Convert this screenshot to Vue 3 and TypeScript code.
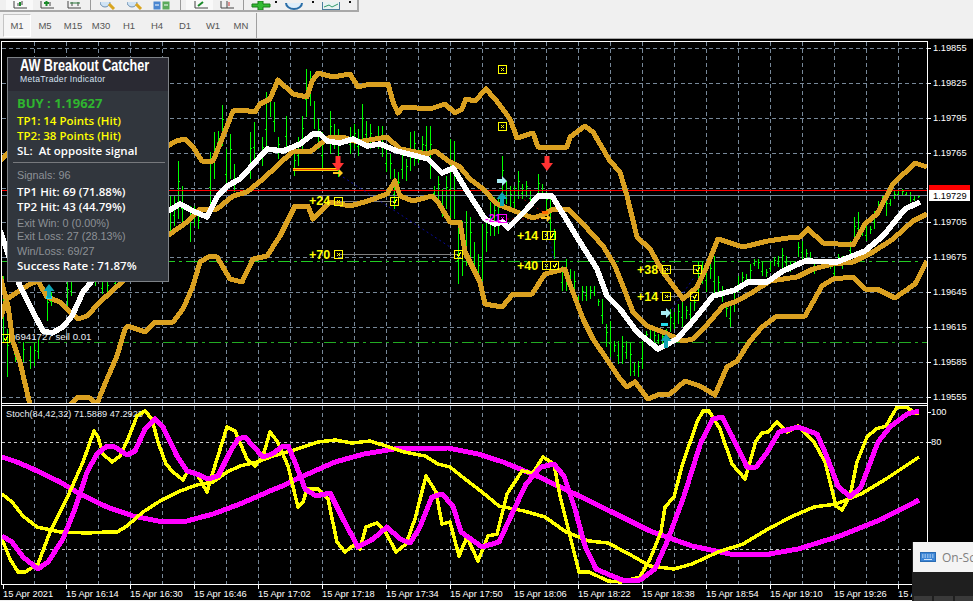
<script setup lang="ts">
const frames = ['M1', 'M5', 'M15', 'M30', 'H1', 'H4', 'D1', 'W1', 'MN']

const vGrid: number[] = []
for (let x = 34; x <= 898; x += 32) vGrid.push(x)
const hGrid = [49, 84, 119, 154, 189, 223, 258, 293, 328, 363, 398]
const priceLabels: [number, string][] = [
  [49, '1.19855'], [84, '1.19825'], [119, '1.19795'], [154, '1.19765'], [223, '1.19705'],
  [258, '1.19675'], [293, '1.19645'], [328, '1.19615'], [363, '1.19585'], [398, '1.19555'],
]
const timeLabels: [number, string][] = [
  [3, '15 Apr 2021'], [66, '15 Apr 16:14'], [130, '15 Apr 16:30'], [194, '15 Apr 16:46'],
  [258, '15 Apr 17:02'], [322, '15 Apr 17:18'], [386, '15 Apr 17:34'], [450, '15 Apr 17:50'],
  [514, '15 Apr 18:06'], [578, '15 Apr 18:22'], [642, '15 Apr 18:38'], [706, '15 Apr 18:54'],
  [770, '15 Apr 19:10'], [834, '15 Apr 19:26'], [898, '15 Apr 19:42'],
]

const upper = '0,162 7,155 14,146 60,135 120,140 168,147 176,142 185,140 193,148 202,162 213,162 218,150 233,112 242,111 255,113 260,105 270,100 278,81 293,95 307,98 312,82 318,74 333,78 350,75 358,88 370,85 388,85 393,103 398,114 403,108 430,110 445,105 455,114 462,110 466,100 475,102 486,90 495,100 510,120 517,139 533,134 538,148 567,148 570,138 585,127 593,133 610,162 620,173 627,197 637,238 650,250 663,273 683,300 697,288 707,267 718,240 743,248 768,242 788,239 800,238 808,230 823,244 853,246 865,225 877,215 893,185 915,164 927,168'
const mid = '0,320 7,300 30,285 38,282 47,298 60,303 70,313 78,320 87,317 100,303 123,282 145,250 170,235 187,223 200,210 217,210 233,197 247,193 263,180 277,167 293,152 310,153 320,145 330,138 343,138 357,143 387,138 400,150 427,155 435,152 450,163 460,168 470,180 483,190 497,205 517,213 533,219 545,215 553,210 568,210 583,225 603,247 615,267 628,300 633,313 647,327 663,333 683,342 693,340 705,328 723,307 737,302 753,293 770,282 797,278 813,270 833,265 853,263 873,253 893,240 913,222 927,215'
const white = '0,232 2,237 7,252 20,287 33,313 43,332 52,334 63,328 72,317 83,293 92,282 120,250 168,212 180,205 193,212 207,218 217,198 227,187 240,180 267,150 283,152 300,145 313,135 320,135 327,142 340,144 353,140 367,147 380,145 397,152 420,158 428,160 442,174 453,169 467,192 485,220 495,225 503,223 508,229 520,217 527,210 538,197 552,197 563,215 580,243 597,270 607,297 620,310 637,333 658,350 677,340 692,323 713,297 735,291 748,283 767,283 783,272 805,262 837,263 865,252 883,237 905,210 920,203'
const lower = '0,277 8,307 13,343 20,363 27,393 30,406 70,406 78,398 90,399 97,406 100,397 107,380 117,357 125,330 128,327 145,333 155,323 173,323 183,310 193,287 200,263 210,257 217,258 230,280 242,283 253,260 267,257 280,237 295,207 308,207 313,220 330,203 350,207 368,202 387,195 395,182 400,197 413,202 432,197 438,203 450,223 460,223 465,253 480,283 485,305 502,308 513,295 532,295 545,275 565,270 568,280 583,320 593,340 608,362 620,380 627,388 635,383 648,400 660,395 670,395 685,382 700,387 715,396 727,368 737,362 750,342 762,328 777,317 805,317 813,303 822,287 833,280 853,278 865,290 877,290 895,299 915,285 927,262'

const yFast = '2,540 10,560 18,573 25,573 38,565 50,533 63,507 68,497 83,463 94,432 98,438 103,455 112,463 120,457 128,440 137,417 145,412 152,420 158,443 166,465 173,473 183,481 188,472 197,475 207,493 213,473 227,428 235,432 247,460 255,467 263,457 270,433 277,442 282,453 288,467 298,508 303,503 307,490 318,490 328,500 337,543 345,553 354,546 360,550 366,528 377,524 385,532 396,553 406,545 415,520 426,477 436,493 442,525 450,523 459,557 467,538 478,562 488,537 497,535 507,495 522,472 533,474 543,458 554,465 560,497 570,537 579,573 589,573 608,582 621,583 640,578 650,560 661,533 665,508 674,498 682,467 697,423 703,412 709,412 720,430 732,465 745,480 756,442 762,434 768,433 777,423 787,433 798,427 814,443 825,463 836,507 842,511 850,497 857,463 867,438 876,430 886,427 897,408 907,408 913,413 919,415'
const mFast = '2,537 12,543 23,558 38,570 48,563 63,540 75,510 87,473 97,455 107,447 115,448 127,456 135,452 145,430 155,420 163,428 177,457 187,472 197,475 208,480 218,477 230,453 238,440 245,438 253,447 263,458 272,455 283,447 288,447 295,463 305,490 316,497 330,494 343,520 358,548 373,540 387,528 400,540 410,544 419,530 432,498 442,495 453,507 461,533 482,548 499,543 511,517 526,485 541,468 554,465 564,477 575,510 585,547 596,570 612,577 625,582 640,581 655,570 667,543 684,497 701,443 713,420 722,418 732,437 747,468 756,468 766,455 779,433 798,428 817,435 825,453 838,487 850,498 861,488 878,443 890,428 907,415 919,412'
const ySlow = '2,495 12,503 23,517 37,528 60,533 87,534 107,533 117,533 127,527 143,513 160,502 180,492 197,486 213,483 227,473 240,467 257,463 273,457 287,453 297,450 318,443 335,441 352,444 370,442 389,448 404,453 425,457 438,465 450,468 465,480 482,493 499,507 524,512 545,518 566,533 589,542 608,544 629,555 650,567 674,570 692,565 718,553 743,545 768,530 793,517 814,508 836,505 861,495 886,480 919,458'
const mSlow = '2,458 17,463 33,470 60,483 80,495 107,508 133,517 163,523 187,522 213,515 240,505 270,492 280,488 301,478 335,463 364,455 394,450 448,449 478,455 503,463 537,477 575,495 612,513 650,532 692,547 730,555 764,556 798,550 840,537 882,520 919,501'

const bars: [number, number, number][] = [
  [3, 277, 343], [7, 330, 378], [15, 343, 363], [23, 343, 363], [30, 347, 370], [34, 343, 367], [38, 340, 360],
  [47, 293, 322], [51, 293, 307], [67, 280, 310], [71, 283, 297], [95, 280, 287], [102, 280, 295], [107, 282, 293], [115, 282, 285],
  [170, 197, 233], [174, 197, 227], [178, 162, 220], [182, 187, 223], [190, 207, 243], [194, 207, 227], [198, 217, 230],
  [210, 153, 210], [214, 133, 180], [218, 132, 150], [222, 106, 147], [226, 150, 190], [230, 135, 180], [234, 165, 193],
  [250, 133, 180], [254, 123, 163], [262, 138, 167], [266, 93, 153], [270, 92, 118], [274, 103, 133], [278, 138, 160],
  [286, 117, 150], [294, 153, 177], [298, 138, 167], [302, 117, 153], [306, 70, 118], [310, 72, 107], [314, 102, 130], [318, 120, 150],
  [322, 133, 170], [330, 112, 155], [334, 125, 150], [338, 130, 178],
  [350, 128, 155], [354, 125, 150], [358, 130, 157], [362, 105, 147], [366, 122, 143], [370, 125, 150], [378, 127, 150], [382, 127, 158], [386, 150, 173],
  [390, 155, 180], [394, 170, 210], [398, 173, 203], [402, 153, 180], [406, 160, 182], [410, 133, 172], [414, 132, 167], [418, 150, 164], [422, 137, 160],
  [426, 127, 157], [430, 127, 180], [434, 187, 198], [438, 177, 200], [442, 190, 218], [446, 177, 210], [450, 140, 220], [454, 142, 220], [458, 223, 285],
  [462, 222, 277], [466, 212, 267], [470, 218, 263], [474, 243, 267], [478, 255, 287], [482, 225, 282], [486, 222, 253], [490, 203, 237], [494, 198, 237],
  [498, 200, 235], [502, 157, 197], [506, 182, 205], [510, 187, 210], [514, 187, 213], [518, 172, 200], [522, 185, 200], [526, 182, 198], [530, 192, 203],
  [538, 175, 200], [542, 185, 200], [546, 193, 213], [550, 195, 240], [554, 230, 260], [562, 267, 292], [566, 260, 292], [570, 270, 283], [574, 272, 302],
  [578, 297, 315], [582, 287, 302], [586, 287, 302], [590, 287, 300], [594, 287, 297], [598, 300, 307], [602, 300, 325], [606, 325, 348], [610, 322, 358],
  [614, 342, 353], [618, 342, 365], [622, 337, 365], [626, 342, 360], [630, 343, 377], [634, 363, 377], [638, 362, 378], [642, 342, 370], [646, 332, 342],
  [650, 328, 345], [654, 332, 345], [658, 335, 345], [662, 333, 345], [666, 330, 345], [670, 310, 333], [674, 313, 330], [678, 305, 325], [682, 302, 328],
  [686, 307, 320], [690, 303, 322], [694, 298, 312], [698, 263, 297], [702, 262, 285], [706, 262, 293], [710, 263, 280], [714, 257, 297], [718, 277, 295],
  [722, 287, 303], [726, 305, 318], [730, 305, 328], [734, 293, 313], [738, 277, 293], [742, 273, 287], [746, 275, 287], [750, 265, 282], [754, 260, 267],
  [758, 260, 270], [762, 263, 277], [766, 270, 278], [770, 262, 273], [774, 258, 267], [778, 257, 268], [782, 249, 270], [786, 257, 267], [790, 262, 273],
  [794, 262, 270], [798, 243, 258], [802, 242, 260], [806, 250, 263], [810, 253, 265], [814, 263, 275], [822, 263, 270], [830, 265, 270], [834, 267, 278],
  [838, 255, 265], [842, 257, 270], [846, 257, 266], [850, 242, 257], [854, 218, 243], [858, 213, 238], [862, 230, 237], [866, 225, 242], [870, 227, 235],
  [874, 212, 230], [878, 202, 212], [882, 197, 210], [886, 197, 217], [890, 200, 207], [894, 192, 200], [898, 192, 197], [902, 190, 197], [906, 193, 197],
  [910, 193, 203], [914, 197, 202], [918, 196, 199],
]
const barPath = bars
  .map(([x, a, b], i) => {
    const h = b - a
    const o = Math.round(a + h * 0.62)
    const c = Math.round(a + h * 0.34)
    const stem = `M${x + 0.5} ${a}V${b}`
    return i % 2 ? `${stem}M${x + 1} ${c + 0.5}h1` : `${stem}M${x} ${o + 0.5}h-1`
  })
  .join('')

type Mark = { x: number; y: number; check?: boolean; magenta?: boolean }
const marks: Mark[] = [
  { x: 502, y: 70 }, { x: 502, y: 127 }, { x: 338, y: 202 }, { x: 394, y: 202, check: true },
  { x: 338, y: 255 }, { x: 458, y: 255, check: true }, { x: 546, y: 236 }, { x: 551, y: 236, check: true },
  { x: 546, y: 266 }, { x: 554, y: 266, check: true }, { x: 666, y: 270 }, { x: 697, y: 270, check: true },
  { x: 666, y: 297 }, { x: 694, y: 297, check: true }, { x: 502, y: 219, magenta: true }, { x: 5, y: 339, check: true },
]
const gains: [number, number, string][] = [
  [309, 206, '+24'], [309, 260, '+70'], [517, 241, '+14'], [517, 271, '+40'], [637, 275, '+38'], [637, 302, '+14'],
]
const downArrows: [number, number][] = [[338, 165], [547, 165]]
const upArrows: [number, number][] = [[49, 292], [502, 200], [666, 342]]
const sideArrows: [number, number][] = [[502, 182], [666, 314]]
const smallArrows: [number, number][] = [[338, 174], [546, 219]]
</script>

<template>
  <div class="page">
    <div class="toolbar">
      <div class="tools">
        <span class="tool pressed">
          <svg width="16" height="9" viewBox="0 0 16 9"><path d="M2 0V7H15M6 2V5M10 0V4" fill="none" stroke="#444" /><path d="M8 1v4" stroke="#1a8a2a" stroke-width="2" /></svg>
        </span>
        <span class="tool">
          <svg width="16" height="9" viewBox="0 0 16 9"><path d="M2 0V7H15M11 1V5" fill="none" stroke="#444" /><path d="M5 2h5M7.5 0v5" stroke="#1a8a2a" stroke-width="2" /></svg>
        </span>
        <span class="tool">
          <svg width="16" height="9" viewBox="0 0 16 9"><path d="M2 0V7H15M6 1V5M12 1V5" fill="none" stroke="#444" /><path d="M4 2h10" stroke="#2a7a3a" /></svg>
        </span>
        <i class="sep" />
        <span class="tool">
          <svg width="16" height="8" viewBox="0 0 16 8"><circle cx="5" cy="0" r="5" fill="#cfe3f5" stroke="#6d8fb0" /><path d="M9 2L14 7" stroke="#d9a520" stroke-width="3" /></svg>
        </span>
        <span class="tool">
          <svg width="16" height="8" viewBox="0 0 16 8"><circle cx="5" cy="0" r="5" fill="#cfe3f5" stroke="#6d8fb0" /><path d="M9 2L14 7" stroke="#d9a520" stroke-width="3" /></svg>
        </span>
        <span class="tool">
          <svg width="17" height="9" viewBox="0 0 17 9"><rect x="0.5" y="0.5" width="7" height="8" fill="#4a86d0" /><rect x="9.5" y="0.5" width="7" height="8" fill="#5aaa5a" /><path d="M2 4h4M11 4h4" stroke="#fff" /></svg>
        </span>
        <i class="sep gap" />
        <span class="tool pressed">
          <svg width="18" height="9" viewBox="0 0 18 9"><path d="M4 0V7H17" fill="none" stroke="#444" /><path d="M7 5L12 1" stroke="#1a8a2a" stroke-width="2" /></svg>
        </span>
        <span class="tool">
          <svg width="16" height="9" viewBox="0 0 16 9"><path d="M2 0V7H15M8 0V7" fill="none" stroke="#444" /><path d="M10 1v4" stroke="#c33" /></svg>
        </span>
        <i class="sep" />
        <span class="tool">
          <svg width="20" height="9" viewBox="0 0 20 9"><path d="M7 0V3H1V6H7V9H12V6H19V3H12V0Z" fill="#33bb33" stroke="#1a7a1a" /></svg>
        </span>
        <span class="tick-dot" />
        <span class="tool clock">
          <svg width="18" height="7" viewBox="0 0 18 7"><path d="M1 0A8 6 0 0 0 17 0" fill="#dfeefa" stroke="#2a6ea8" stroke-width="2" /></svg>
        </span>
        <span class="tick-dot" />
        <span class="tool clock">
          <svg width="18" height="8" viewBox="0 0 18 8"><rect x="0.5" y="-3" width="17" height="10.5" fill="#e8f2f2" stroke="#4a7c9c" /><path d="M2 5L7 3L10 5L16 2" fill="none" stroke="#2f9a6a" /></svg>
        </span>
        <span class="tick-dot" />
      </div>
    </div>
    <div class="frames">
      <div class="frame-list">
        <span v-for="f in frames" :key="f" class="frame" :class="{ on: f === 'M1' }">{{ f }}</span>
      </div>
    </div>

    <div class="window">
      <svg class="chart" width="973" height="561" viewBox="0 40 973 561">
        <defs>
          <clipPath id="mainClip"><rect x="2" y="43" width="925" height="361" /></clipPath>
          <clipPath id="subClip"><rect x="2" y="407" width="925" height="178" /></clipPath>
        </defs>

        <g stroke="#778899" stroke-dasharray="4 3" shape-rendering="crispEdges">
          <line v-for="x in vGrid" :key="'v' + x" :x1="x + 0.5" y1="43" :x2="x + 0.5" y2="404" />
          <line v-for="x in vGrid" :key="'s' + x" :x1="x + 0.5" y1="407" :x2="x + 0.5" y2="586" />
          <line v-for="y in hGrid" :key="'h' + y" x1="2" :y1="y + 0.5" x2="927" :y2="y + 0.5" />
        </g>
        <g stroke="#c8c8c8" stroke-dasharray="3 3" shape-rendering="crispEdges">
          <line x1="2" y1="443.5" x2="927" y2="443.5" />
          <line x1="2" y1="550.5" x2="927" y2="550.5" />
          <line x1="2" y1="585.5" x2="927" y2="585.5" />
        </g>

        <g clip-path="url(#mainClip)">
          <path :d="barPath" fill="none" stroke="#00ff00" shape-rendering="crispEdges" />

          <g shape-rendering="crispEdges">
            <line x1="2" y1="191.5" x2="927" y2="191.5" stroke="#ff0000" />
            <line x1="2" y1="196.5" x2="927" y2="196.5" stroke="#778899" />
            <line x1="2" y1="262.5" x2="920" y2="262.5" stroke="#22cc22" stroke-dasharray="12 4 3 4" />
            <line x1="2" y1="343.5" x2="927" y2="343.5" stroke="#22aa22" stroke-dasharray="12 4 3 4" />
            <line x1="338" y1="202.5" x2="394" y2="202.5" stroke="#808080" />
            <line x1="338" y1="255.5" x2="458" y2="255.5" stroke="#808080" />
            <line x1="666" y1="270.5" x2="697" y2="270.5" stroke="#808080" />
            <line x1="666" y1="297.5" x2="694" y2="297.5" stroke="#808080" />
          </g>
          <g fill="none" stroke-dasharray="2 3">
            <path d="M343 178L450 248" stroke="#0a0a9a" />
            <path d="M547 233L555 263" stroke="#0a0a9a" />
            <path d="M672 310L695 277" stroke="#0a0a9a" />
            <path d="M507 220H543" stroke="#8b0000" />
            <path d="M520 198L543 213" stroke="#8b0000" />
          </g>

          <g fill="none" stroke="#daa020" stroke-width="5" stroke-linejoin="round" shape-rendering="crispEdges">
            <polyline :points="upper" />
            <polyline :points="mid" />
            <polyline :points="lower" />
          </g>
          <polyline :points="white" fill="none" stroke="#ffffff" stroke-width="5.5" stroke-linejoin="round" shape-rendering="crispEdges" />

          <text class="chart-note" x="15" y="341">6941727 sell 0.01</text>

          <line x1="293" y1="170.5" x2="338" y2="170.5" stroke="#ffcc00" stroke-width="3" shape-rendering="crispEdges" />
          <line x1="293" y1="170.5" x2="338" y2="170.5" stroke="#ff4500" shape-rendering="crispEdges" />
          <line x1="542" y1="213.5" x2="548" y2="213.5" stroke="#ff6a00" stroke-width="3" shape-rendering="crispEdges" />
          <line x1="661" y1="325.5" x2="668" y2="325.5" stroke="#22ddee" stroke-width="3" shape-rendering="crispEdges" />
          <line x1="46" y1="298.5" x2="52" y2="298.5" stroke="#22ddee" stroke-width="3" shape-rendering="crispEdges" />

          <path v-for="a in downArrows" :key="'d' + a[0]" d="M-2.5 -8H2.5V-1H6L0 7L-6 -1H-2.5Z" fill="#ff3333" :transform="`translate(${a[0]} ${a[1]})`" />
          <path v-for="a in upArrows" :key="'u' + a[0]" d="M0 -7L5.5 0H2V7H-2V0H-5.5Z" fill="#0fa5b5" :transform="`translate(${a[0]} ${a[1]})`" />
          <path v-for="a in sideArrows" :key="'r' + a[0]" d="M-5 -2H0V-5L5 0L0 5V2H-5Z" fill="#a8eef4" :transform="`translate(${a[0]} ${a[1]})`" />
          <path v-for="a in smallArrows" :key="'y' + a[0]" d="M-5 -1H1V-4L5 0L1 4V1H-5Z" fill="#ffc81e" :transform="`translate(${a[0]} ${a[1]})`" />

          <text class="loss" x="485" y="223">-21</text>
          <text v-for="g in gains" :key="g[2] + g[0] + g[1]" class="gain" :x="g[0]" :y="g[1]">{{ g[2] }}</text>

          <g v-for="m in marks" :key="'m' + m.x + m.y" :transform="`translate(${m.x} ${m.y})`" fill="none" :stroke="m.magenta ? '#ff00ff' : '#ffff00'" shape-rendering="crispEdges">
            <rect x="-3.5" y="-3.5" width="8" height="8" />
            <path v-if="m.check" d="M-1 0.5L0.5 2.5L2.5 -1.5" />
            <path v-else d="M-1 -1L2 2M2 -1L-1 2" />
          </g>
        </g>

        <g clip-path="url(#subClip)" fill="none" stroke-linejoin="round" shape-rendering="crispEdges">
          <text class="chart-note stoch" x="6" y="418">Stoch(84,42,32) 71.5889 47.2923</text>
          <polyline :points="mSlow" stroke="#ff00ff" stroke-width="5" />
          <polyline :points="ySlow" stroke="#ffff00" stroke-width="3.5" />
          <polyline :points="yFast" stroke="#ffff00" stroke-width="3.5" />
          <polyline :points="mFast" stroke="#ff00ff" stroke-width="5" />
        </g>

        <g stroke="#ffffff" fill="none" shape-rendering="crispEdges">
          <path d="M2 42.5H927.5V586M1.5 42V586M1 404.5H928M1 406.5H928M1 585.5H928" />
          <path v-for="p in priceLabels" :key="'t' + p[0]" :d="`M928 ${p[0] + 0.5}h3`" />
          <path v-for="t in timeLabels" :key="'k' + t[0]" :d="`M${t[0] + 0.5} 586v4`" />
          <path d="M928 413.5h3M928 443.5h3" />
        </g>

        <text v-for="p in priceLabels" :key="'p' + p[0]" class="axis" x="933" :y="p[0] + 3">{{ p[1] }}</text>
        <text class="axis" x="931" y="416">100</text>
        <text class="axis" x="931" y="446">80</text>
        <text v-for="t in timeLabels" :key="'l' + t[0]" class="axis" :x="t[0]" y="598">{{ t[1] }}</text>

        <svg x="929" y="186" width="41" height="6" viewBox="0 0 41 6"><rect width="41" height="6" fill="#ff0000" /><text class="axis box" x="4" y="11">1.19733</text></svg>
        <rect x="929" y="191" width="41" height="11" fill="#ffffff" />
        <text class="axis box" x="933" y="200">1.19729</text>
      </svg>

      <section class="panel">
        <header class="panel-head">
          <div class="title">AW Breakout Catcher</div>
          <div class="subtitle">MetaTrader Indicator</div>
        </header>
        <div class="panel-body">
          <div class="buy">BUY : 1.19627</div>
          <div class="line hit">TP1: 14 Points (Hit)</div>
          <div class="line hit">TP2: 38 Points (Hit)</div>
          <div class="line strong">SL:&nbsp; At opposite signal</div>
          <hr class="rule" />
          <div class="muted first">Signals: 96</div>
          <div class="line strong">TP1 Hit: 69 (71.88%)</div>
          <div class="line strong">TP2 Hit: 43 (44.79%)</div>
          <div class="muted win">Exit Win: 0 (0.00%)</div>
          <div class="muted loss-row">Exit Loss: 27 (28.13%)</div>
          <div class="muted ratio">Win/Loss: 69/27</div>
          <div class="line strong last">Success Rate : 71.87%</div>
        </div>
      </section>

      <aside class="popup">
        <div class="popup-top">
          <svg width="16" height="10" viewBox="0 0 16 10">
            <rect x="0.5" y="0.5" width="15" height="9" fill="#3d86d6" stroke="#2a6cb4" />
            <path d="M2 3h12M2 5h12" stroke="#cfe4fa" stroke-dasharray="1.5 1" />
            <path d="M4 7.5h8" stroke="#cfe4fa" />
          </svg>
          <span>On-Screen Keyboard</span>
        </div>
        <div class="popup-bottom"><i /><i /><i /></div>
      </aside>
    </div>
  </div>
</template>

<style scoped>
.page {
  width: 973px;
  height: 601px;
  overflow: hidden;
  background: #f0f0f0;
  display: flex;
  flex-direction: column;
  font-family: "Liberation Sans", Arial, sans-serif;
}
.toolbar {
  height: 13px;
  flex: none;
  display: flex;
}
.tools {
  width: 359px;
  height: 12px;
  box-sizing: border-box;
  border-right: 2px solid #a8a8a8;
  border-bottom: 2px solid #a8a8a8;
  display: flex;
  align-items: flex-end;
  padding-left: 6px;
  overflow: hidden;
}
.tool {
  flex: none;
  width: 27px;
  height: 10px;
  display: flex;
  justify-content: center;
  align-items: flex-end;
}
.tool svg { display: block; }
.tool.pressed { background: #f9f9f9; }
.tool.clock { width: 34px; }
.tick-dot {
  flex: none;
  width: 2px;
  height: 2px;
  margin: 0 0 7px 1px;
  background: #111;
}
.sep {
  flex: none;
  width: 1px;
  height: 10px;
  margin: 0 3px;
  background: #9a9a9a;
}
.sep.gap { margin: 0 5px; }
.frames {
  height: 25px;
  flex: none;
  display: flex;
}
.frame-list {
  width: 257px;
  box-sizing: border-box;
  border-right: 1px solid #a0a0a0;
  display: flex;
  align-items: center;
  padding-left: 3px;
}
.frame {
  width: 28px;
  height: 23px;
  box-sizing: border-box;
  display: flex;
  align-items: center;
  justify-content: center;
  font-size: 9.5px;
  color: #555;
}
.frame.on {
  background: #f6f6f6;
  border: 1px solid #c4c4c4;
  border-right-color: #fff;
  border-bottom-color: #fff;
}
.window {
  position: relative;
  height: 563px;
  flex: none;
  border-top: 2px solid #a8a8a8;
  box-sizing: border-box;
}
.chart {
  display: block;
  position: absolute;
  left: 0;
  top: -1px;
  background: #000;
}
.axis {
  font-family: "Liberation Sans", Arial, sans-serif;
  font-size: 9.3px;
  fill: #ffffff;
  stroke: none;
}
.axis.box { fill: #000000; }
.chart-note {
  font-family: "Liberation Sans", Arial, sans-serif;
  font-size: 9.7px;
  fill: #e8eef5;
  stroke: none;
}
.chart-note.stoch { font-size: 9.2px; }
.gain {
  font-family: "Liberation Sans", Arial, sans-serif;
  font-size: 12.5px;
  font-weight: 700;
  fill: #ffff00;
}
.loss {
  font-family: "Liberation Sans", Arial, sans-serif;
  font-size: 11px;
  font-weight: 700;
  fill: #ff00ff;
}
.panel {
  position: absolute;
  left: 7px;
  top: 17px;
  width: 162px;
  height: 225px;
  box-sizing: border-box;
  border: 1px solid #7d8186;
  background: #31363d;
  color: #fff;
}
.panel-head {
  height: 33px;
  box-sizing: border-box;
  padding-left: 12px;
  background: #2a2a33;
}
.title {
  font-size: 16px;
  line-height: 16px;
  font-weight: 700;
  white-space: nowrap;
  transform: scaleX(0.79);
  transform-origin: left center;
}
.subtitle {
  font-size: 8.6px;
  line-height: 11px;
  letter-spacing: 0.3px;
  color: #d8e4f4;
  white-space: nowrap;
}
.panel-body {
  padding: 3px 4px 0 9px;
}
.buy {
  font-family: "Open Sans", sans-serif;
  font-size: 13px;
  font-weight: 700;
  line-height: 19px;
  color: #2fb52f;
}
.line {
  font-family: "Open Sans", sans-serif;
  font-size: 11.5px;
  font-weight: 600;
  line-height: 15px;
  white-space: nowrap;
}
.hit { color: #ffff00; }
.strong { color: #ffffff; }
.rule {
  margin: 4px 0 6px -4px;
  border: 0;
  height: 1px;
  width: 152px;
  background: #77797d;
}
.muted {
  font-size: 10.8px;
  line-height: 14.5px;
  color: #8d9196;
  white-space: nowrap;
}
.first { line-height: 13px; margin-bottom: 2px; }
.win { margin-top: 2px; }
.loss-row { margin-top: -2px; }
.ratio { margin-top: 1px; }
.last { margin-top: -1px; }
.popup {
  position: absolute;
  left: 912px;
  top: 502px;
  width: 61px;
  height: 59px;
  overflow: hidden;
  background: #1f1f1f;
  display: flex;
  flex-direction: column;
}
.popup-top {
  height: 30px;
  flex: none;
  margin-left: 1px;
  background: #f4f4f4;
  display: flex;
  align-items: center;
  gap: 6px;
  padding-left: 7px;
  white-space: nowrap;
  font-family: "Open Sans", sans-serif;
  font-size: 12px;
  color: #808080;
}
.popup-top svg { flex: none; }
.popup-bottom {
  margin-top: auto;
  height: 5px;
  display: flex;
  gap: 2px;
  padding-left: 2px;
}
.popup-bottom i {
  width: 20px;
  background: #3a3a3a;
}
</style>
